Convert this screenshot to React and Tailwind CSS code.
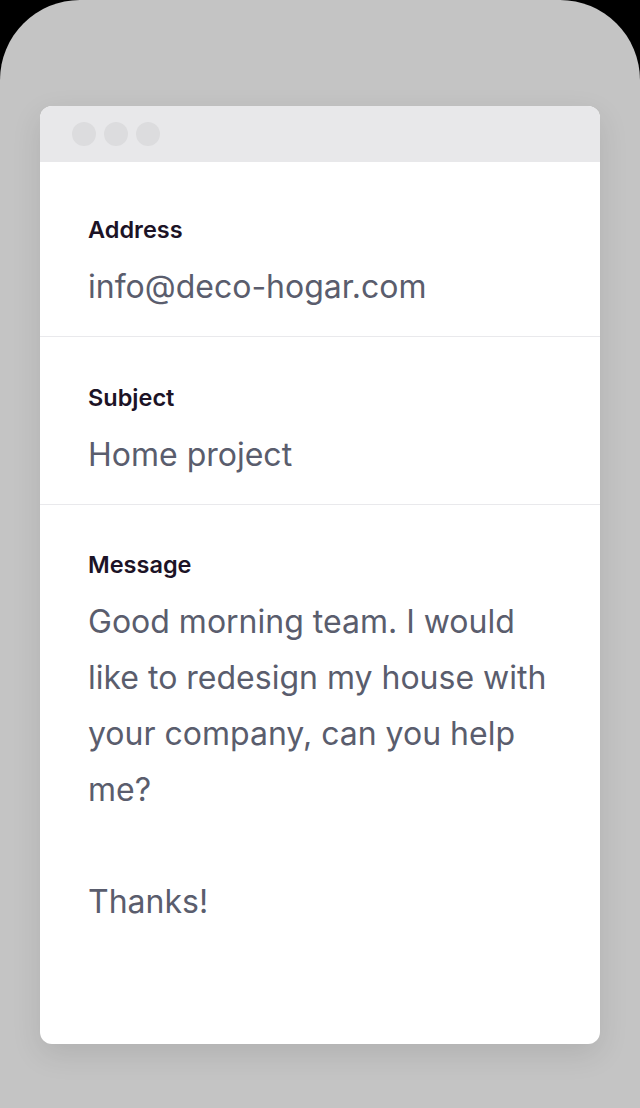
import React from 'react';

const font = { fontFamily: 'Inter, "Noto Sans", sans-serif' };

function Field({ label, children, first }) {
  return (
    <div className={`px-12 pb-[21px] border-b border-[#e9e9ec] ${first ? 'pt-[51px]' : 'pt-[44px]'}`}>
      <p className="text-[23.5px] leading-[33px] font-semibold text-[#1c1326]">{label}</p>
      <div className="mt-[13px] text-[32px] leading-[56px] text-[#5a5d6d]">{children}</div>
    </div>
  );
}

export default function App() {
  return (
    <div className="w-[640px] h-[1108px] bg-black overflow-hidden" style={font}>
      <div className="h-full bg-[#c4c4c4] rounded-t-[80px] px-10 pt-[106px]">
        {/* Window card */}
        <div className="h-[938px] bg-white rounded-xl overflow-hidden shadow-[0_10px_30px_rgba(0,0,0,0.1)] flex flex-col">
          <div className="h-14 bg-[#e8e8ea] flex items-center gap-2 px-8 shrink-0">
            <span className="w-6 h-6 rounded-full bg-[#dcdcde]" />
            <span className="w-6 h-6 rounded-full bg-[#dcdcde]" />
            <span className="w-6 h-6 rounded-full bg-[#dcdcde]" />
          </div>

          <Field label="Address" first>info@deco-hogar.com</Field>
          <Field label="Subject">Home project</Field>

          {/* Message */}
          <div className="px-12 pt-[43px]">
            <p className="text-[23.5px] leading-[33px] font-semibold text-[#1c1326]">Message</p>
            <div className="mt-[13px] text-[32px] leading-[56px] text-[#5a5d6d] whitespace-nowrap">
              <p>Good morning team. I would</p>
              <p>like to redesign my house with</p>
              <p>your company, can you help</p>
              <p>me?</p>
              <p>&nbsp;</p>
              <p>Thanks!</p>
            </div>
          </div>
        </div>
      </div>
    </div>
  );
}
